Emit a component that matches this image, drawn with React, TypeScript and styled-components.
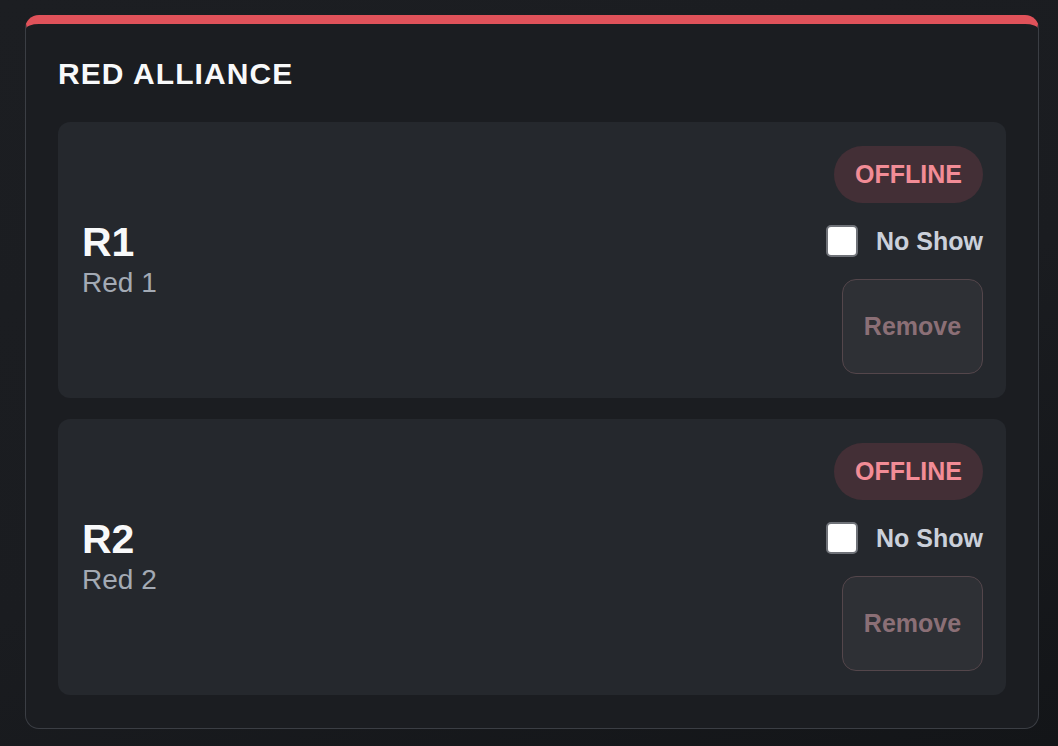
import React from 'react'
import styled, { createGlobalStyle } from 'styled-components'

const GlobalStyle = createGlobalStyle`
    html, body {
        margin: 0;
        padding: 0;
        height: 100%;
    }
    body {
        background: linear-gradient(160deg, #1c1e22 0%, #1a1c20 55%, #131518 100%);
        font-family: "Liberation Sans", Arial, sans-serif;
        color: #f8f9fa;
    }
    * {
        box-sizing: border-box;
    }
`

const Page = styled.div`
    min-height: 746px;
    padding: 15px 19px 17px 25px;
`

const AlliancePanel = styled.section`
    background-color: #1b1d21;
    border: 1px solid #3b3e44;
    border-top: 9px solid #e0525a;
    border-radius: 14px;
    padding: 33px 32px 33px 32px;
`

const Title = styled.h2`
    margin: 0 0 31px 0;
    font-size: 30px;
    font-weight: 700;
    letter-spacing: 1.1px;
    line-height: 34px;
    color: #f8f9fa;
`

const SlotList = styled.div`
    display: grid;
    row-gap: 21px;
`

const SlotCard = styled.div`
    display: flex;
    align-items: center;
    justify-content: space-between;
    background-color: #25282d;
    border-radius: 12px;
    padding: 24px 23px 24px 24px;
`

const SlotInfo = styled.div`
    display: flex;
    flex-direction: column;
`

const SlotCode = styled.span`
    font-size: 41px;
    font-weight: 700;
    line-height: 46px;
    color: #f8f9fa;
`

const SlotName = styled.span`
    font-size: 28px;
    line-height: 36px;
    color: #a3aab4;
`

const Controls = styled.div`
    display: flex;
    flex-direction: column;
    align-items: flex-end;
    row-gap: 20px;
`

const StatusBadge = styled.span<{ online?: boolean }>`
    display: inline-block;
    padding: 14px 21px;
    border-radius: 999px;
    font-size: 25px;
    font-weight: 700;
    line-height: 29px;
    color: ${props => props.online ? "#7ee2a0" : "#f28c96"};
    background-color: ${props => props.online ? "#28403a" : "#432f36"};
`

const CheckRow = styled.label`
    display: flex;
    align-items: center;
    column-gap: 18px;
    height: 36px;
    font-size: 25px;
    font-weight: 700;
    color: #cbd0da;
`

const CheckBox = styled.span`
    display: block;
    width: 32px;
    height: 32px;
    border-radius: 5px;
    background-color: #ffffff;
    border: 2px solid #6f7278;
`

const RemoveButton = styled.button`
    width: 141px;
    height: 95px;
    border-radius: 14px;
    border: 1px solid #54464b;
    background-color: #2e3035;
    color: #8b6f76;
    font-family: inherit;
    font-size: 25px;
    font-weight: 700;
    cursor: not-allowed;
`

const slots = [
    { code: "R1", name: "Red 1" },
    { code: "R2", name: "Red 2" }
]

const App = () => {
    return (
        <Page>
            <GlobalStyle />
            <AlliancePanel>
                <Title>RED ALLIANCE</Title>
                <SlotList>
                    {slots.map(s =>
                        <SlotCard key={s.code}>
                            <SlotInfo>
                                <SlotCode>{s.code}</SlotCode>
                                <SlotName>{s.name}</SlotName>
                            </SlotInfo>
                            <Controls>
                                <StatusBadge>OFFLINE</StatusBadge>
                                <CheckRow>
                                    <CheckBox />
                                    No Show
                                </CheckRow>
                                <RemoveButton disabled>Remove</RemoveButton>
                            </Controls>
                        </SlotCard>
                    )}
                </SlotList>
            </AlliancePanel>
        </Page>
    )
}

export default App
